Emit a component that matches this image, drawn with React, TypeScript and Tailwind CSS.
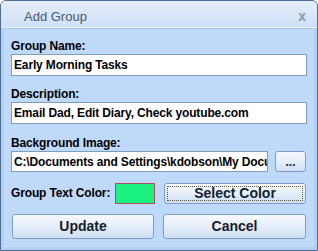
import React from "react";

const font = { fontFamily: '"Liberation Sans", Arial, sans-serif' };

function Btn({ children, className = "", focus = false }: { children: React.ReactNode; className?: string; focus?: boolean }) {
  return (
    <div
      className={`relative flex items-center justify-center rounded-[3px] border border-[#7d9cc4] bg-gradient-to-b from-[#f6f9fd] via-[#e6eef9] to-[#cfdff3] font-bold text-[#14202e] ${className}`}
    >
      {focus && <div className="pointer-events-none absolute inset-[2px] border border-dotted border-[#5a5a3a]" />}
      <span className="relative">{children}</span>
    </div>
  );
}

export default function App() {
  return (
    <div className="w-[318px] h-[251px] overflow-hidden" style={font}>
      <div className="w-[318px] h-[251px] flex flex-col rounded-t-[6px] border border-[#4e6d96] bg-[#b6cff0]">
        <div className="h-[27px] flex items-center justify-between rounded-t-[5px] border-b border-[#eaf2fc] bg-gradient-to-b from-[#e5eefa] to-[#cfe0f6] pl-[23px] pr-[11px]">
          <span className="text-[13px] text-[#4a5a6e] pt-[6px]">Add Group</span>
          <span className="text-[14px] font-bold text-[#8a98aa] pt-[4px]">x</span>
        </div>
        <div className="flex-1 mx-[3px] mb-[3px] flex flex-col bg-[#bfd9fb] px-[7px] pt-[10px] border-t border-[#a9c4e8] tracking-[-0.15px]">
          <div className="h-[15px] text-[12px] font-bold text-black leading-[15px]">Group Name:</div>
          <div className="h-[22px] flex items-center border border-[#7f9db9] bg-white pl-[2px] text-[12px] font-bold text-black">Early Morning Tasks</div>
          <div className="mt-[11px] h-[15px] text-[12px] font-bold text-black leading-[15px]">Description:</div>
          <div className="h-[22px] flex items-center border border-[#7f9db9] bg-white pl-[2px] text-[12px] font-bold text-black">Email Dad, Edit Diary, Check youtube.com</div>
          <div className="mt-[12px] h-[15px] text-[12px] font-bold text-black leading-[15px]">Background Image:</div>
          <div className="flex h-[21px] gap-[7px]">
            <div className="w-[257px] flex items-center overflow-hidden whitespace-nowrap border border-[#7f9db9] bg-white pl-[2px] text-[12px] font-bold text-black">C:\Documents and Settings\kdobson\My Docu</div>
            <Btn className="w-[31px] h-[21px] text-[12px] tracking-normal">...</Btn>
          </div>
          <div className="mt-[10px] flex h-[22px] items-center">
            <div className="w-[104px] text-[12px] font-bold text-black">Group Text Color:</div>
            <div className="w-[40px] h-[21px] border border-[#b04c55] bg-[#1cf282]" />
            <Btn focus className="ml-[9px] w-[142px] h-[21px] text-[14px] tracking-normal">Select Color</Btn>
          </div>
          <div className="mt-[10px] flex gap-[9px]">
            <Btn className="ml-[1px] w-[142px] h-[25px] text-[14px] tracking-normal">Update</Btn>
            <Btn className="w-[143px] h-[25px] text-[14px] tracking-normal">Cancel</Btn>
          </div>
        </div>
      </div>
    </div>
  );
}
